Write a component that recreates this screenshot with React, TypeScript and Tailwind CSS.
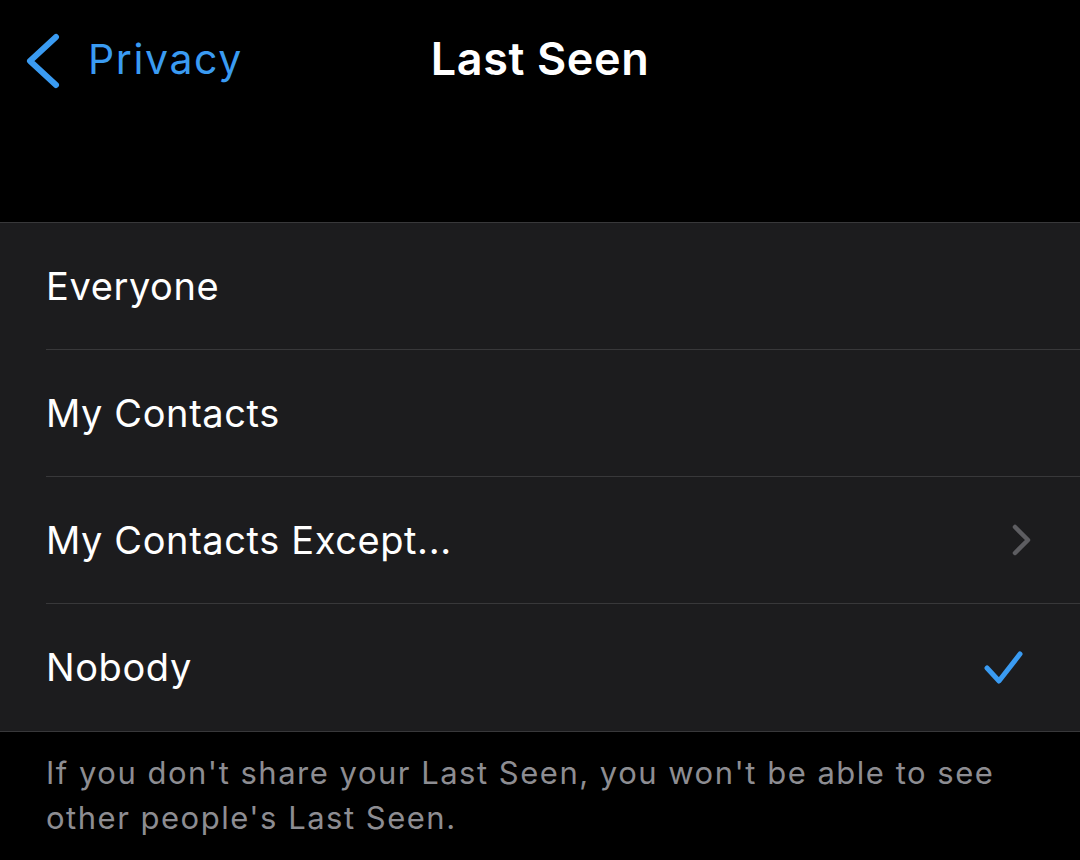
const options = [
  { id: 1, label: "Everyone" },
  { id: 2, label: "My Contacts" },
  { id: 3, label: "My Contacts Except...", more: true },
  { id: 4, label: "Nobody", selected: true },
];

function App() {
  return (
    <div
      className="w-[1080px] h-[860px] bg-black text-white overflow-hidden"
      style={{ fontFamily: "Inter, 'Noto Sans', sans-serif" }}
    >
      {/* nav bar */}
      <div className="relative h-[222px]">
        <div className="flex items-center h-[118px] pl-[24px]">
          <svg width="40" height="60" viewBox="0 0 40 60" fill="none">
            <polyline
              points="32,8 6,32 32,56"
              stroke="#3a9bf2"
              strokeWidth="6"
              strokeLinecap="round"
              strokeLinejoin="round"
            />
          </svg>
          <span className="ml-[24px] mt-[2px] text-[41px] text-[#3a9bf2] tracking-[1.6px]">Privacy</span>
        </div>
        <h1 className="absolute left-0 right-0 top-[25px] text-center text-[45px] font-semibold tracking-[0.6px]">
          Last Seen
        </h1>
      </div>

      {/* options */}
      <div className="bg-[#1c1c1e] border-t border-b border-[#38383a]">
        {options.map((item, i) => (
          <div key={item.id} className="pl-[46px]">
            <div
              className={
                "flex items-center justify-between h-[127px] " +
                (i < options.length - 1 ? "border-b border-[#38383a]" : "")
              }
            >
              <span className="text-[38px] tracking-[0.6px]">{item.label}</span>
              {item.more && (
                <svg width="24" height="34" viewBox="0 0 24 34" fill="none" className="mr-[46px]">
                  <polyline
                    points="5,4 18,17 5,30"
                    stroke="#5d5d61"
                    strokeWidth="4.5"
                    strokeLinecap="round"
                    strokeLinejoin="round"
                  />
                </svg>
              )}
              {item.selected && (
                <svg width="44" height="40" viewBox="0 0 44 40" fill="none" className="mr-[54px]">
                  <polyline
                    points="5,20 17,33 38,6"
                    stroke="#3a9bf2"
                    strokeWidth="5"
                    strokeLinecap="round"
                    strokeLinejoin="round"
                  />
                </svg>
              )}
            </div>
          </div>
        ))}
      </div>

      <p className="px-[46px] pt-[18px] text-[31px] leading-[45px] tracking-[1.5px] text-[#8d8d92]">
        If you don't share your Last Seen, you won't be able to see other people's Last Seen.
      </p>
    </div>
  );
}

export default App;
